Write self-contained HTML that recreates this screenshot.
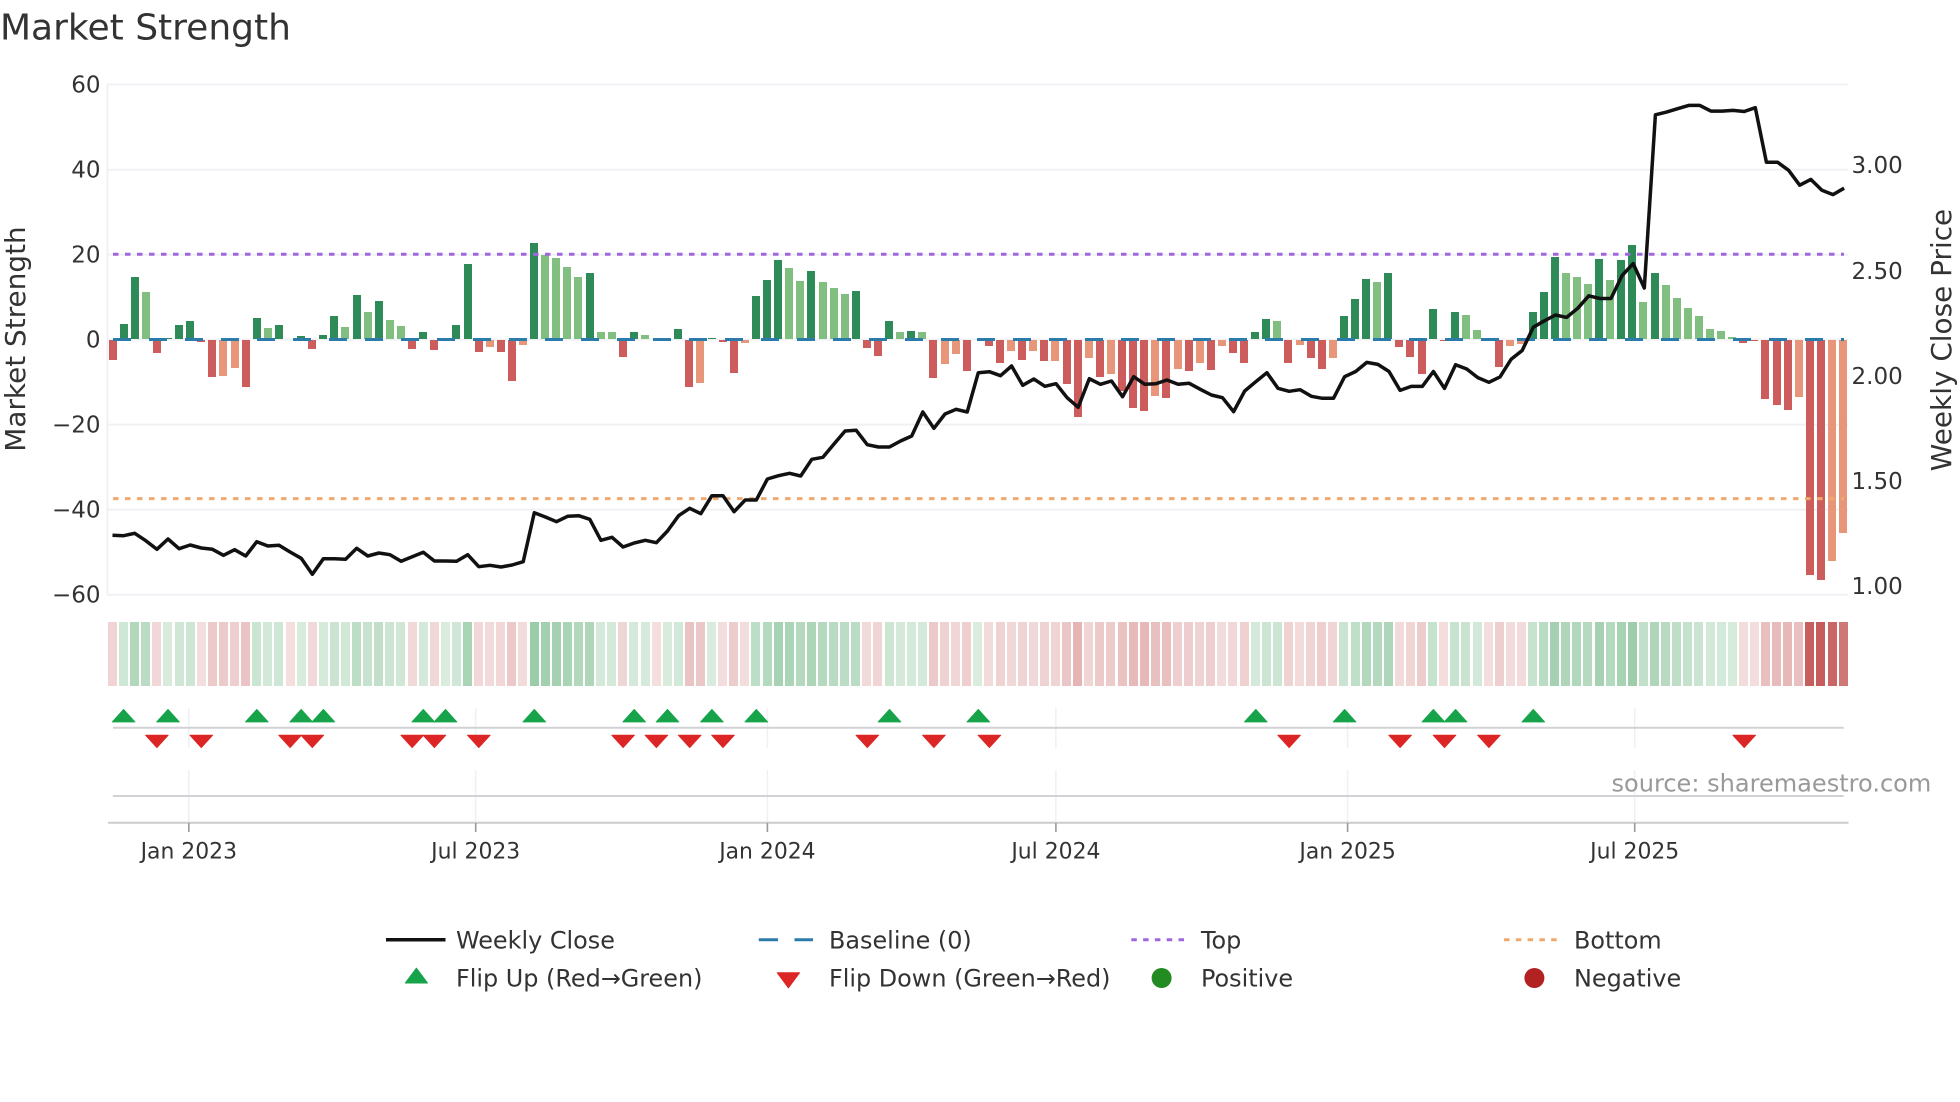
<!DOCTYPE html>
<html><head><meta charset="utf-8"><title>Market Strength</title>
<style>
html,body{margin:0;padding:0;background:#fff}
#p{position:relative;width:1960px;height:1102px;overflow:hidden;background:#fff}
#b{position:absolute;left:107px;top:0;height:1102px;width:1760px;display:flex}
#b i{display:block;flex:none;width:11.1px;height:100%;position:relative}
#b i:before{content:"";position:absolute;left:1px;width:9px;top:622px;height:64px}
#b i:after{content:"";position:absolute;left:1.5px;width:8px}
.a:before,.b:before{background:rgba(28,140,60,calc(.17 + var(--v)*.0118))}
.c:before,.d:before{background:rgba(178,34,34,calc(.15 - var(--v)*.0104))}
.a:after,.b:after{top:calc(339px - var(--v)*4.25px);height:calc(var(--v)*4.25px)}
.c:after,.d:after{top:340px;height:calc(var(--v)*-4.25px)}
.a:after{background:#2e8b57}.b:after{background:#80bf80}.c:after{background:#cd5c5c}.d:after{background:#e8967a}
svg{position:absolute;left:0;top:0}
text{font-family:"DejaVu Sans","Liberation Sans",sans-serif;fill:#333}
.t{font-size:23px}.x{font-size:21.9px;text-anchor:middle}.l{font-size:23.9px}.r{font-size:27.9px;text-anchor:middle}
</style></head><body><div id="p">
<svg width="1960" height="1102" viewBox="0 0 1960 1102">
<g stroke="#f0f1f5" stroke-width="2" fill="none">
<path d="M107 84.5H1848M107 169.7H1848M107 254.6H1848M107 339.5H1848M107 424.6H1848M107 509.6H1848M107 594.7H1848M107.5 84V595"/>
</g>
<g stroke="#eef0f4" stroke-width="1.5" fill="none">
<path d="M188.8 708V748M188.8 770V823M475.7 708V748M475.7 770V823M767.4 708V748M767.4 770V823M1055.9 708V748M1055.9 770V823M1347.6 708V748M1347.6 770V823M1634.7 708V748M1634.7 770V823"/>
</g>
<path d="M113 727.7H1843.7M113 796H1843.7" stroke="#d2d2d6" stroke-width="2" fill="none"/>
<path d="M108 822.7H1848.5" stroke="#cbcbce" stroke-width="2" fill="none"/>
<path d="M188.8 823V832M475.7 823V832M767.4 823V832M1055.9 823V832M1347.6 823V832M1634.7 823V832" stroke="#9a9a9a" stroke-width="1.6" fill="none"/>
</svg>
<div id="b"><i class=c style=--v:-4.6></i><i class=a style=--v:3.6></i><i class=a style=--v:14.5></i><i class=b style=--v:11.1></i><i class=c style=--v:-3.1></i><i class=a style=--v:.2></i><i class=a style=--v:3.2></i><i class=a style=--v:4.3></i><i class=c style=--v:-.4></i><i class=c style=--v:-8.7></i><i class=d style=--v:-8.5></i><i class=d style=--v:-6.7></i><i class=c style=--v:-11.1></i><i class=a style=--v:5></i><i class=b style=--v:2.7></i><i class=a style=--v:3.4></i><i class=c style=--v:0></i><i class=a style=--v:.7></i><i class=c style=--v:-2></i><i class=a style=--v:1></i><i class=a style=--v:5.4></i><i class=b style=--v:2.9></i><i class=a style=--v:10.4></i><i class=b style=--v:6.4></i><i class=a style=--v:9></i><i class=b style=--v:4.5></i><i class=b style=--v:3.1></i><i class=c style=--v:-2></i><i class=a style=--v:1.7></i><i class=c style=--v:-2.4></i><i class=a style=--v:0></i><i class=a style=--v:3.4></i><i class=a style=--v:17.6></i><i class=c style=--v:-2.9></i><i class=d style=--v:-1.7></i><i class=c style=--v:-2.9></i><i class=c style=--v:-9.6></i><i class=d style=--v:-1.2></i><i class=a style=--v:22.7></i><i class=b style=--v:19.8></i><i class=b style=--v:19></i><i class=b style=--v:17></i><i class=b style=--v:14.6></i><i class=a style=--v:15.5></i><i class=b style=--v:1.7></i><i class=b style=--v:1.6></i><i class=c style=--v:-4.1></i><i class=a style=--v:1.7></i><i class=b style=--v:1></i><i class=c style=--v:0></i><i class=a style=--v:.3></i><i class=a style=--v:2.4></i><i class=c style=--v:-11.1></i><i class=d style=--v:-10.2></i><i class=a style=--v:.3></i><i class=c style=--v:-.5></i><i class=c style=--v:-7.7></i><i class=d style=--v:-.6></i><i class=a style=--v:10.2></i><i class=a style=--v:13.9></i><i class=a style=--v:18.6></i><i class=b style=--v:16.8></i><i class=b style=--v:13.6></i><i class=a style=--v:16.1></i><i class=b style=--v:13.4></i><i class=b style=--v:12></i><i class=b style=--v:10.7></i><i class=a style=--v:11.2></i><i class=c style=--v:-1.8></i><i class=c style=--v:-3.8></i><i class=a style=--v:4.3></i><i class=b style=--v:1.7></i><i class=a style=--v:1.9></i><i class=b style=--v:1.7></i><i class=c style=--v:-8.9></i><i class=d style=--v:-5.6></i><i class=d style=--v:-3.3></i><i class=c style=--v:-7.2></i><i class=a style=--v:0></i><i class=c style=--v:-1.4></i><i class=c style=--v:-5.3></i><i class=d style=--v:-2.7></i><i class=c style=--v:-4.8></i><i class=d style=--v:-2.5></i><i class=c style=--v:-5></i><i class=d style=--v:-4.9></i><i class=c style=--v:-10.4></i><i class=c style=--v:-18.2></i><i class=d style=--v:-4.2></i><i class=c style=--v:-8.6></i><i class=d style=--v:-8.1></i><i class=c style=--v:-11.9></i><i class=c style=--v:-16></i><i class=c style=--v:-16.6></i><i class=d style=--v:-13.2></i><i class=c style=--v:-13.6></i><i class=d style=--v:-6.9></i><i class=c style=--v:-7.4></i><i class=d style=--v:-5.3></i><i class=c style=--v:-7.1></i><i class=d style=--v:-1.5></i><i class=c style=--v:-3.1></i><i class=c style=--v:-5.5></i><i class=a style=--v:1.6></i><i class=a style=--v:4.7></i><i class=b style=--v:4.2></i><i class=c style=--v:-5.3></i><i class=d style=--v:-1.1></i><i class=c style=--v:-4.3></i><i class=c style=--v:-6.8></i><i class=d style=--v:-4.2></i><i class=a style=--v:5.5></i><i class=a style=--v:9.3></i><i class=a style=--v:14.2></i><i class=b style=--v:13.4></i><i class=a style=--v:15.5></i><i class=c style=--v:-1.7></i><i class=c style=--v:-4></i><i class=c style=--v:-8></i><i class=a style=--v:7.1></i><i class=c style=--v:-.2></i><i class=a style=--v:6.4></i><i class=b style=--v:5.7></i><i class=b style=--v:2.1></i><i class=c style=--v:-.2></i><i class=c style=--v:-6.4></i><i class=d style=--v:-1.4></i><i class=d style=--v:-.9></i><i class=a style=--v:6.4></i><i class=a style=--v:11.1></i><i class=a style=--v:19.3></i><i class=b style=--v:15.5></i><i class=b style=--v:14.7></i><i class=b style=--v:13></i><i class=a style=--v:18.8></i><i class=b style=--v:13.9></i><i class=a style=--v:18.6></i><i class=a style=--v:22.2></i><i class=b style=--v:8.8></i><i class=a style=--v:15.5></i><i class=b style=--v:12.6></i><i class=b style=--v:9.7></i><i class=b style=--v:7.2></i><i class=b style=--v:5.3></i><i class=b style=--v:2.3></i><i class=b style=--v:1.8></i><i class=b style=--v:.4></i><i class=c style=--v:-.6></i><i class=c style=--v:-.1></i><i class=c style=--v:-13.8></i><i class=c style=--v:-15.2></i><i class=c style=--v:-16.5></i><i class=d style=--v:-13.5></i><i class=c style=--v:-55.4></i><i class=c style=--v:-56.5></i><i class=d style=--v:-52></i><i class=d style=--v:-45.3></i></div>
<svg width="1960" height="1102" viewBox="0 0 1960 1102">
<defs>
<path id="u" d="M-11.3 12.4L0 0L11.3 12.4Z" fill="#16a34a" stroke="#16a34a" stroke-width="1" stroke-linejoin="round"/>
<path id="d" d="M-11.3 0L11.3 0L0 12.4Z" fill="#dc2626" stroke="#dc2626" stroke-width="1" stroke-linejoin="round"/>
</defs>
<path d="M113 339.5H1844" fill="none" stroke="#2b7bab" stroke-width="3" stroke-dasharray="18 18"/>
<path d="M113 254.3H1844" fill="none" stroke="#a066e0" stroke-width="3" stroke-dasharray="5.5 6.5"/>
<path d="M113 498.6H1844" fill="none" stroke="#efa96e" stroke-width="3" stroke-dasharray="5.5 6.5"/>
<polyline fill="none" stroke="#111" stroke-width="3.5" stroke-linejoin="round" points="112.5,535.3 123.6,535.7 134.7,533.3 145.8,540.7 156.9,549.3 168,539 179.1,548.7 190.2,545 201.3,548 212.4,549.3 223.5,555.3 234.6,549.7 245.7,556 256.8,541.7 267.9,546 279,545.3 290.1,552 301.2,558.3 312.3,574.3 323.4,558.7 334.5,558.7 345.6,559.3 356.7,548.3 367.8,556 378.9,553 390,554.7 401.1,561.3 412.2,556.7 423.3,552.3 434.4,561 445.5,561 456.6,561.3 467.7,554.7 478.8,566.7 489.9,565.3 501,567 512.1,565 523.2,561.7 534.3,512.7 545.4,517 556.5,521.7 567.6,516.3 578.7,515.7 589.8,519.3 600.9,540.3 612,537.3 623.1,547 634.2,543 645.3,540.3 656.4,542.7 667.5,531 678.6,515.7 689.7,508.3 700.8,513.7 711.9,495.7 723,495.7 734.1,511.7 745.2,500 756.3,500 767.4,479 778.5,475.7 789.6,473.3 800.7,476 811.8,459.3 822.9,457.3 834,444 845.1,431 856.2,430.3 867.3,444.7 878.4,447 889.5,447 900.6,441 911.7,436 922.8,412 933.9,428.3 945,414 956.1,409.3 967.2,412 978.3,372.7 989.4,371.7 1000.5,375.7 1011.6,366 1022.7,385.3 1033.8,379 1044.9,386.3 1056,383.7 1067.1,397.7 1078.2,407.3 1089.3,378.7 1100.4,384.3 1111.5,381 1122.6,396.7 1133.7,376.7 1144.8,384.3 1155.9,383.7 1167,380 1178.1,384.3 1189.2,383.3 1200.3,389.3 1211.4,395 1222.5,397.7 1233.6,411.7 1244.7,391 1255.8,381.7 1266.9,372.7 1278,388.3 1289.1,391.3 1300.2,389.7 1311.3,396.3 1322.4,398.3 1333.5,398.3 1344.6,376.7 1355.7,371.5 1366.8,362.4 1377.9,364.4 1389,371.5 1400.1,390.4 1411.2,386.4 1422.3,386.4 1433.4,371.5 1444.5,388.4 1455.6,364.7 1466.7,369 1477.8,377.6 1488.9,382.3 1500,376.9 1511.1,359.3 1522.2,350.5 1533.3,327.2 1544.4,320.8 1555.5,315 1566.6,317.4 1577.7,308.3 1588.8,295.8 1599.9,298.5 1611,298.5 1622.1,275.5 1633.2,263.6 1644.3,288 1655.4,114.8 1666.5,112.1 1677.6,108.7 1688.7,105.4 1699.8,105.4 1710.9,111.1 1722,111.1 1733.1,110.4 1744.2,111.5 1755.3,107.7 1766.4,162.2 1777.5,162.2 1788.6,170.3 1799.7,185.2 1810.8,179.4 1821.9,190.2 1833,194.6 1844.1,188.2"/>
<g transform="translate(0,709.5)">
<use href="#u" x="123.6"/><use href="#u" x="168"/><use href="#u" x="256.8"/><use href="#u" x="301.2"/><use href="#u" x="323.4"/><use href="#u" x="423.3"/><use href="#u" x="445.5"/><use href="#u" x="534.3"/><use href="#u" x="634.2"/><use href="#u" x="667.5"/><use href="#u" x="711.9"/><use href="#u" x="756.3"/><use href="#u" x="889.5"/><use href="#u" x="978.3"/><use href="#u" x="1255.8"/><use href="#u" x="1344.6"/><use href="#u" x="1433.4"/><use href="#u" x="1455.6"/><use href="#u" x="1533.3"/>
</g>
<g transform="translate(0,735.2)">
<use href="#d" x="156.9"/><use href="#d" x="201.3"/><use href="#d" x="290.1"/><use href="#d" x="312.3"/><use href="#d" x="412.2"/><use href="#d" x="434.4"/><use href="#d" x="478.8"/><use href="#d" x="623.1"/><use href="#d" x="656.4"/><use href="#d" x="689.7"/><use href="#d" x="723"/><use href="#d" x="867.3"/><use href="#d" x="933.9"/><use href="#d" x="989.4"/><use href="#d" x="1289.1"/><use href="#d" x="1400.1"/><use href="#d" x="1444.5"/><use href="#d" x="1488.9"/><use href="#d" x="1744.2"/>
</g>
<text x="0" y="39.5" style="font-size:36px">Market Strength</text>
<g text-anchor="end">
<text class="t" x="100.5" y="92.7">60</text><text class="t" x="100.5" y="177.5">40</text><text class="t" x="100.5" y="262.6">20</text><text class="t" x="100.5" y="347.4">0</text><text class="t" x="100.5" y="432.6">−20</text><text class="t" x="100.5" y="517.6">−40</text><text class="t" x="100.5" y="602.7">−60</text>
</g>
<text class="t" x="1851.5" y="173">3.00</text><text class="t" x="1851.5" y="278.8">2.50</text><text class="t" x="1851.5" y="384">2.00</text><text class="t" x="1851.5" y="489">1.50</text><text class="t" x="1851.5" y="594">1.00</text>
<text class="r" transform="translate(25,339) rotate(-90)">Market Strength</text>
<text class="r" transform="translate(1951,340) rotate(-90)">Weekly Close Price</text>
<text class="x" x="188.8" y="858.3">Jan 2023</text><text class="x" x="475.7" y="858.3">Jul 2023</text><text class="x" x="767.4" y="858.3">Jan 2024</text><text class="x" x="1055.9" y="858.3">Jul 2024</text><text class="x" x="1347.6" y="858.3">Jan 2025</text><text class="x" x="1634.7" y="858.3">Jul 2025</text>
<text x="1611.5" y="791.7" style="font-size:24.05px;fill:#999">source: sharemaestro.com</text>
<path d="M386 939.7H445.5" stroke="#111" stroke-width="3.5" fill="none"/>
<path d="M758.8 939.7H778M794.5 939.7H813" stroke="#2b7bab" stroke-width="3" fill="none"/>
<path d="M1131.3 939.7H1185.7" stroke="#a066e0" stroke-width="3" stroke-dasharray="5.5 6.3" fill="none"/>
<path d="M1504 939.7H1558.5" stroke="#efa96e" stroke-width="3" stroke-dasharray="5.5 6.3" fill="none"/>
<path d="M416.4 968.2L427.5 983L405.3 983Z" fill="#16a34a" stroke="#16a34a" stroke-width="1" stroke-linejoin="round"/>
<path d="M777.3 972.8L799.5 972.8L788.4 987.8Z" fill="#dc2626" stroke="#dc2626" stroke-width="1" stroke-linejoin="round"/>
<circle cx="1161.6" cy="978" r="10" fill="#228b22"/>
<circle cx="1534.4" cy="978" r="10" fill="#b22222"/>
<text class="l" x="456" y="948.3">Weekly Close</text><text class="l" x="829" y="948.3">Baseline (0)</text><text class="l" x="1201" y="948.3">Top</text><text class="l" x="1574" y="948.3">Bottom</text>
<text class="l" x="456" y="986.7">Flip Up (Red→Green)</text><text class="l" x="829" y="986.7">Flip Down (Green→Red)</text><text class="l" x="1201" y="986.7">Positive</text><text class="l" x="1574" y="986.7">Negative</text>
</svg>
</div></body></html>
